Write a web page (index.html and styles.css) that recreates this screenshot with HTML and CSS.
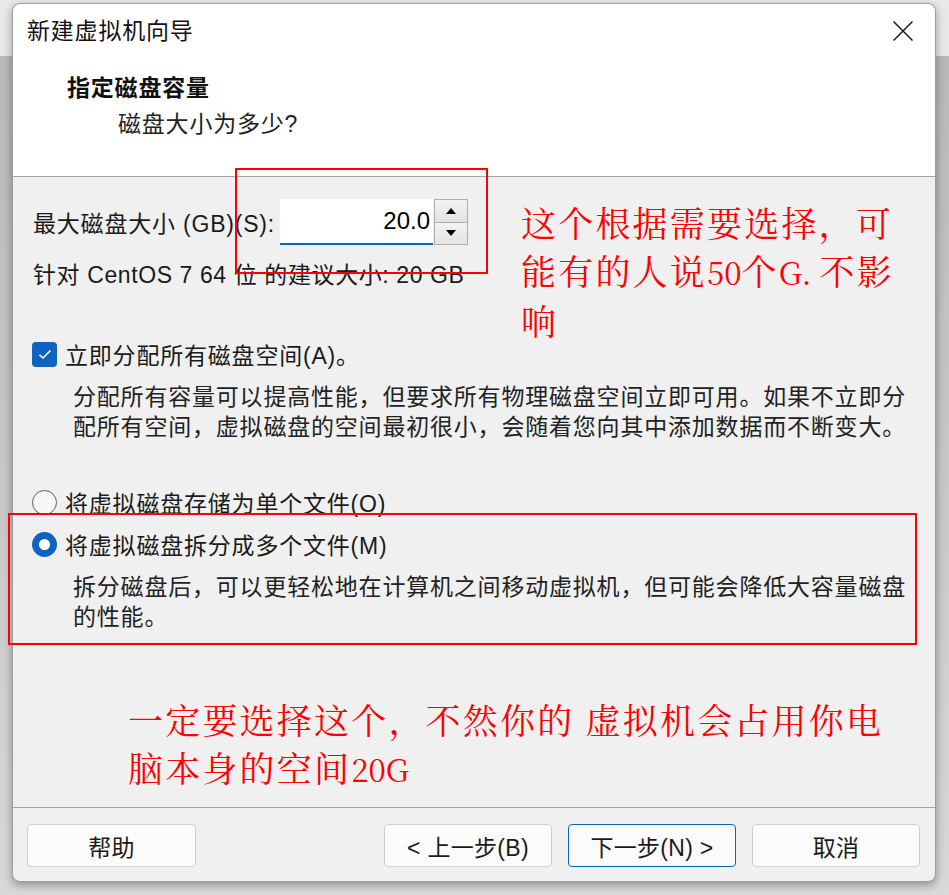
FILE: index.html
```html
<!DOCTYPE html>
<html lang="zh-CN">
<head>
<meta charset="utf-8">
<title>新建虚拟机向导</title>
<link rel="stylesheet" href="styles.css">
</head>
<body>
<div class="dialog">
  <div class="titlebar">
    <span class="title">新建虚拟机向导</span>
    <svg class="close" width="20" height="20" viewBox="0 0 20 20"><path d="M0.5 0.5 L19.5 19.5 M19.5 0.5 L0.5 19.5" stroke="#1b1b1b" stroke-width="1.5" fill="none"/></svg>
  </div>
  <div class="header">
    <div class="h-title">指定磁盘容量</div>
    <div class="h-sub">磁盘大小为多少?</div>
  </div>
  <div class="content">
    <div class="size-row">
      <label class="size-label">最大磁盘大小 (GB)(S):</label>
      <div class="spin">
        <div class="spin-input">20.0</div>
        <div class="spin-btns">
          <div class="spin-btn"><span class="tri-up"></span></div>
          <div class="spin-btn"><span class="tri-down"></span></div>
        </div>
      </div>
    </div>
    <div class="rec">针对 CentOS 7 64 位 的建议大小: 20 GB</div>
    <div class="opt check-row">
      <span class="checkbox"><svg width="14" height="11" viewBox="0 0 14 11"><path d="M1.5 5.8 L5 9 L12.5 1.5" stroke="#fff" stroke-width="1.6" fill="none"/></svg></span>
      <span>立即分配所有磁盘空间(A)。</span>
    </div>
    <div class="desc">分配所有容量可以提高性能，但要求所有物理磁盘空间立即可用。如果不立即分<br>配所有空间，虚拟磁盘的空间最初很小，会随着您向其中添加数据而不断变大。</div>
    <div class="opt radio-row first">
      <span class="radio"></span>
      <span>将虚拟磁盘存储为单个文件(O)</span>
    </div>
    <div class="opt radio-row second">
      <span class="radio checked"></span>
      <span>将虚拟磁盘拆分成多个文件(M)</span>
    </div>
    <div class="desc desc2">拆分磁盘后，可以更轻松地在计算机之间移动虚拟机，但可能会降低大容量磁盘<br>的性能。</div>
  </div>
  <div class="footer">
    <button class="btn">帮助</button>
    <div class="spacer"></div>
    <button class="btn">&lt; 上一步(B)</button>
    <button class="btn primary">下一步(N) &gt;</button>
    <button class="btn">取消</button>
  </div>

  <div class="redbox box1"></div>
  <div class="redbox box2"></div>
  <div class="note note1">这个根据需要选择，可<br>能有的人说<span class="lat">50</span>个<span class="lat">G. </span>不影<br>响</div>
  <div class="note note2">一定要选择这个，不然你的 虚拟机会占用你电<br>脑本身的空间<span class="lat">20G</span></div>
</div>
</body>
</html>
```

FILE: styles.css
```css
html, body {
  margin: 0;
  padding: 0;
}
body {
  width: 949px;
  height: 895px;
  overflow: hidden;
  background: linear-gradient(to bottom, #e9e9e9 0, #e9e9e9 56px, #b9b9b9 56px, #c6c6c6 420px, #d9d9d9 100%);
  font-family: "Liberation Sans", "Noto Sans CJK SC", sans-serif;
  font-size: 23px;
  letter-spacing: 0.8px;
  color: #1a1a1a;
}
.dialog {
  position: relative;
  margin: 3px 0 0 12px;
  width: 924px;
  height: 879px;
  box-sizing: border-box;
  border: 1px solid #9c9c9c;
  border-radius: 8px;
  background: #f0f0f0;
  box-shadow: 0 3px 10px rgba(0,0,0,0.35);
  display: flex;
  flex-direction: column;
}
.titlebar {
  height: 53px;
  display: flex;
  align-items: center;
  justify-content: space-between;
  padding: 0 22px 0 14px;
  background: #fff;
  border-radius: 8px 8px 0 0;
}
.title {
  font-size: 23px;
  line-height: 30px;
  color: #111;
  padding-top: 1px;
}
.close {
  display: block;
  margin-top: 1px;
}
.header {
  background: #fff;
  padding: 13px 0 34px 0;
  border-bottom: 1px solid #a3a3a3;
}
.h-title {
  padding-left: 54px;
  line-height: 36px;
  font-weight: bold;
  color: #111;
}
.h-sub {
  padding-left: 105px;
  line-height: 36px;
  color: #222;
}
.content {
  flex: 1;
  padding-left: 20px;
}
.size-row {
  margin-top: 22px;
  height: 46px;
  display: flex;
  align-items: center;
}
.size-label {
  width: 247px;
  flex: none;
}
.spin {
  display: flex;
  height: 46px;
}
.spin-input {
  width: 153px;
  height: 46px;
  box-sizing: border-box;
  background: #fff;
  border-bottom: 2px solid #0067c0;
  text-align: right;
  padding-right: 3px;
  font-size: 24px;
  line-height: 44px;
  color: #000;
  letter-spacing: 0;
}
.spin-btns {
  display: flex;
  flex-direction: column;
  width: 34px;
  margin-left: 1px;
}
.spin-btn {
  flex: 1;
  box-sizing: border-box;
  border: 1px solid #adadad;
  background: linear-gradient(#f3f3f3, #e3e3e3);
  display: flex;
  align-items: center;
  justify-content: center;
}
.spin-btn + .spin-btn {
  border-top: none;
}
.tri-up {
  width: 0; height: 0;
  border-left: 5px solid transparent;
  border-right: 5px solid transparent;
  border-bottom: 6px solid #000;
}
.tri-down {
  width: 0; height: 0;
  border-left: 5px solid transparent;
  border-right: 5px solid transparent;
  border-top: 6px solid #000;
}
.rec {
  margin-top: 15px;
  line-height: 30px;
  letter-spacing: 0.6px;
}
.opt {
  display: flex;
  align-items: center;
  height: 30px;
}
.check-row {
  margin-top: 49px;
}
.checkbox {
  width: 25px;
  height: 25px;
  margin-left: -1px;
  margin-right: 8px;
  border-radius: 4px;
  background: #0f62bd;
  display: flex;
  align-items: center;
  justify-content: center;
  flex: none;
}
.desc {
  margin-top: 13px;
  padding-left: 40px;
  line-height: 30px;
  color: #222;
  white-space: nowrap;
}
.radio-row.first {
  margin-top: 45px;
}
.radio-row.second {
  margin-top: 12px;
}
.radio {
  width: 25px;
  height: 25px;
  margin-left: -1px;
  margin-right: 8px;
  box-sizing: border-box;
  border-radius: 50%;
  border: 1.5px solid #5f5f5f;
  background: #f7f7f7;
  flex: none;
}
.radio.checked {
  border: 7.5px solid #0f62bd;
  background: #fff;
}
.footer {
  border-top: 1px solid #a3a3a3;
  padding: 16px 15px 14px 14px;
  display: flex;
  gap: 16px;
}
.spacer {
  flex: 1;
}
.btn {
  width: 168px;
  height: 43px;
  box-sizing: border-box;
  border: 1px solid #d0d0d0;
  border-radius: 4px;
  background: #fbfbfb;
  font-family: "Liberation Sans", "Noto Sans CJK SC", sans-serif;
  font-size: 23px;
  color: #1a1a1a;
  padding: 0;
  letter-spacing: 0.3px;
}
.btn:first-child {
  width: 169px;
}
.btn.primary {
  border-color: #0067c0;
}
.redbox {
  position: absolute;
  border: 2px solid #ff0000;
  box-sizing: border-box;
}
.box1 {
  left: 222px;
  top: 164px;
  width: 253px;
  height: 106px;
}
.box2 {
  left: -5px;
  top: 509px;
  width: 909px;
  height: 132px;
}
.note {
  position: absolute;
  color: #ff0000;
  font-family: "Noto Serif CJK SC", "Liberation Serif", "Noto Sans CJK SC", serif;
  font-size: 35px;
  line-height: 48px;
  letter-spacing: 2.2px;
  white-space: nowrap;
}
.note .lat {
  font-size: 31px;
  letter-spacing: 0;
}
.note1 {
  left: 508px;
  top: 194px;
}
.note2 {
  left: 115px;
  top: 691px;
}
```
